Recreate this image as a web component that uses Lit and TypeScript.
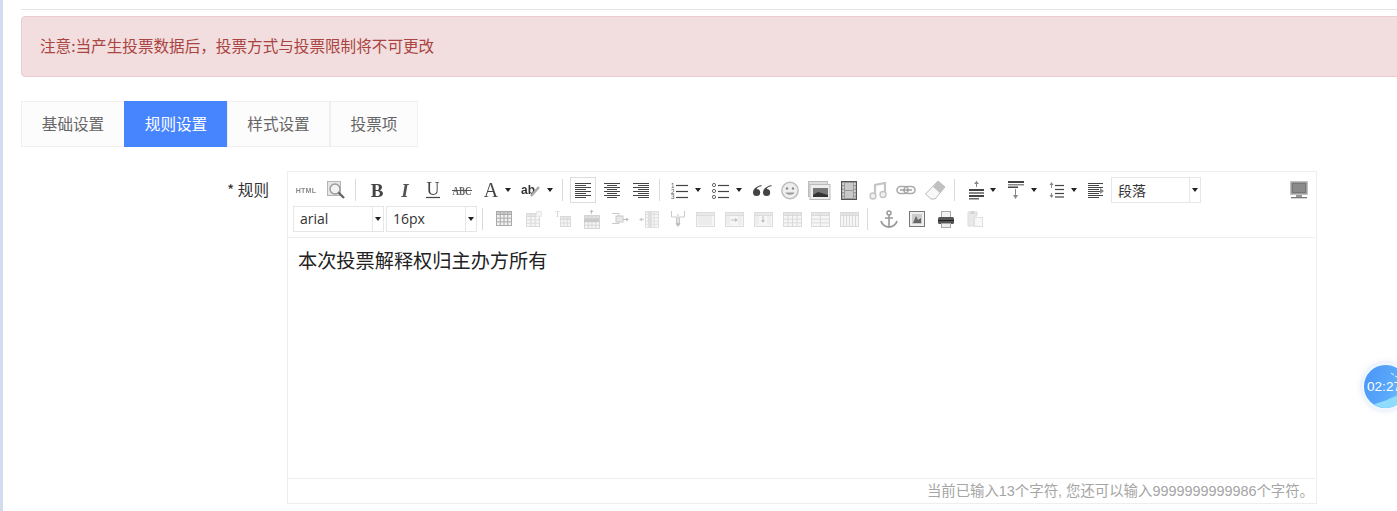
import { LitElement, html, css, svg } from "lit";
import { customElement } from "lit/decorators.js";

const D = "#555";
const line = (x1: number, y1: number, x2: number, y2: number, c = D, w = 1) =>
  svg`<line x1=${x1} y1=${y1} x2=${x2} y2=${y2} stroke=${c} stroke-width=${w}/>`;
const rect = (x: number, y: number, w: number, h: number, f = "none", s = "none") =>
  svg`<rect x=${x} y=${y} width=${w} height=${h} fill=${f} stroke=${s}/>`;
const grid = (x: number, y: number, w: number, h: number, cols: number, rows: number, c = "#c4c4c4", head = "#d8d8d8") => svg`
  ${rect(x + 0.5, y + 0.5, w, h, "#f2f2f2", c)}
  ${rect(x + 0.5, y + 0.5, w, 3, head, c)}
  ${Array.from({ length: cols - 1 }, (_, i) => line(x + 0.5 + ((i + 1) * w) / cols, y, x + 0.5 + ((i + 1) * w) / cols, y + h, c))}
  ${Array.from({ length: rows - 1 }, (_, i) => line(x, y + 3.5 + ((i + 1) * (h - 3)) / rows, x + w, y + 3.5 + ((i + 1) * (h - 3)) / rows, c))}`;
const txtLines = (ys: number[], xs: [number, number][], c = "#444") =>
  ys.map((y, i) => line(xs[i % xs.length][0], y + 0.5, xs[i % xs.length][1], y + 0.5, c, 1));

const icons: Record<string, unknown> = {
  html: svg`<text x="10" y="13" font-size="7" font-weight="700" text-anchor="middle" fill="#888" font-family="Liberation Sans" letter-spacing=".3">HTML</text>`,
  preview: svg`<rect x="1.5" y="1.5" width="13" height="14" fill="#e6e6e6" stroke="#b5b5b5"/><circle cx="9" cy="9" r="5" fill="#f2f2f2" stroke="#999" stroke-width="1.4"/><path d="M12.5 12.5 18 18" stroke="#666" stroke-width="2.4"/>`,
  bold: svg`<text x="10" y="16.5" font-size="19" font-weight="700" text-anchor="middle" fill="#444" font-family="Liberation Serif">B</text>`,
  italic: svg`<text x="10" y="16.5" font-size="19" font-weight="700" font-style="italic" text-anchor="middle" fill="#555" font-family="Liberation Serif">I</text>`,
  underline: svg`<text x="10" y="15" font-size="18" text-anchor="middle" fill="#444" font-family="Liberation Serif">U</text>${line(3, 17.5, 17, 17.5, "#444", 1.2)}`,
  strike: svg`<text x="10" y="14.5" font-size="12" font-weight="700" text-anchor="middle" fill="#666" font-family="Liberation Serif" textLength="19" lengthAdjust="spacingAndGlyphs">ABC</text>${line(0, 10.5, 20, 10.5, "#555")}`,
  color: svg`<text x="10" y="16.5" font-size="20" text-anchor="middle" fill="#444" font-family="Liberation Serif">A</text>`,
  back: svg`<text x="7" y="14" font-size="12" font-weight="700" text-anchor="middle" fill="#333" font-family="Liberation Sans">ab</text><path d="M10 16 18 7" stroke="#aaa" stroke-width="2.6"/>`,
  left: svg`<g>${txtLines([3, 5, 7, 9, 11, 13, 15, 17], [[2, 18], [2, 13], [2, 18], [2, 13]])}</g>`,
  center: svg`<g>${txtLines([3, 5, 7, 9, 11, 13, 15, 17], [[2, 18], [5, 15], [2, 18], [5, 15]])}</g>`,
  right: svg`<g>${txtLines([3, 5, 7, 9, 11, 13, 15, 17], [[2, 18], [7, 18], [2, 18], [7, 18]])}</g>`,
  ol: svg`<text x="1" y="7.5" font-size="6.5" fill="#555" font-family="Liberation Sans">1</text><text x="1" y="13.5" font-size="6.5" fill="#555" font-family="Liberation Sans">2</text><text x="1" y="19" font-size="6.5" fill="#555" font-family="Liberation Sans">3</text>${line(6, 5.5, 18, 5.5, "#444", 1.2)}${line(6, 11.5, 18, 11.5, "#444", 1.2)}${line(6, 17.5, 18, 17.5, "#444", 1.2)}`,
  ul: svg`<circle cx="3" cy="5" r="1.6" fill="none" stroke="#666"/><circle cx="3" cy="11" r="1.6" fill="none" stroke="#666"/><circle cx="3" cy="17" r="1.6" fill="none" stroke="#666"/>${line(7, 5.5, 18, 5.5, "#444", 1.2)}${line(7, 11.5, 18, 11.5, "#444", 1.2)}${line(7, 17.5, 18, 17.5, "#444", 1.2)}`,
  quote: svg`<path d="M9.5 5C5 6 1 9 1 12.5a3.6 3.6 0 1 0 3.6-3.6c.4-1.4 3-2.4 4.9-2.6ZM19.5 5c-4.5 1-8.5 4-8.5 7.5a3.6 3.6 0 1 0 3.6-3.6c.4-1.4 3-2.4 4.9-2.6Z" fill="#444"/>`,
  emoji: svg`<circle cx="10" cy="10.5" r="8.2" fill="#eee" stroke="#bbb" stroke-width="1.4"/><circle cx="7" cy="8.5" r="1.2" fill="#888"/><circle cx="13" cy="8.5" r="1.2" fill="#888"/><path d="M5.5 12.5h9c-1 3-8 3-9 0Z" fill="#999"/>`,
  image: svg`<rect x="-.5" y="1.5" width="19" height="15" fill="#ddd" stroke="#bbb"/><rect x="1" y="4.5" width="20" height="15" fill="#eee" stroke="#bbb"/><rect x="4" y="8" width="15" height="9" fill="#777"/><path d="M4 15l5-3 10 3v2H4Z" fill="#333"/>`,
  video: svg`<rect x="2.5" y="1.5" width="15" height="18" fill="#999" stroke="#555"/><rect x="6" y="3" width="8" height="7" fill="#c9c9c9"/><rect x="6" y="11" width="8" height="7" fill="#c9c9c9"/><path d="M4.2 3v15" stroke="#ddd" stroke-dasharray="2 1.5" stroke-width="1.6"/><path d="M15.8 3v15" stroke="#ddd" stroke-dasharray="2 1.5" stroke-width="1.6"/>`,
  music: svg`<path d="M7 15V5l10-2v11" fill="none" stroke="#c4c4c4" stroke-width="2.2"/><circle cx="5" cy="16" r="3" fill="#f0f0f0" stroke="#c4c4c4" stroke-width="1.4"/><circle cx="15" cy="14.5" r="3" fill="#f0f0f0" stroke="#c4c4c4" stroke-width="1.4"/>`,
  link: svg`<rect x="1" y="6.5" width="11" height="7" rx="3.5" fill="none" stroke="#aaa" stroke-width="1.6"/><rect x="8" y="6.5" width="11" height="7" rx="3.5" fill="none" stroke="#aaa" stroke-width="1.6"/>${line(4, 10, 16, 10, "#999", 1.4)}`,
  eraser: svg`<path d="M13 1 20 7 10 19H6L0.5 14Z" fill="#f8f8f8" stroke="#bbb"/><path d="M13 1 20 7 15 13 8 7Z" fill="#c0c0c0"/>`,
  rowbefore: svg`${line(10.5, 1, 10.5, 7, "#888")}<path d="M8 4l2.5-3L13 4Z" fill="#888"/>${rect(3, 9, 15, 2, "#444")}${rect(3, 12, 15, 2, "#888")}${rect(3, 15, 15, 2, "#444")}${rect(3, 18, 10, 1.5, "#666")}`,
  rowafter: svg`${rect(2, 1, 16, 2, "#444")}${rect(2, 4, 16, 1.5, "#888")}${rect(2, 6.5, 10, 1.5, "#444")}${line(9.5, 9, 9.5, 18, "#888")}<path d="M7 15l2.5 4 2.5-4Z" fill="#888"/>`,
  height: svg`<path d="M5.5 4V8M5.5 13v4" stroke="#888"/><path d="M3.5 5l2-3 2 3ZM3.5 15l2 3 2-3Z" fill="#888"/>${line(9, 5.5, 18, 5.5, "#444", 1.2)}${line(9, 9.5, 18, 9.5, "#444", 1.2)}${line(9, 13.5, 18, 13.5, "#444", 1.2)}${line(9, 17, 18, 17, "#444", 1.2)}`,
  indent: svg`${txtLines([3, 5, 7, 9, 11, 13, 15, 17], [[2, 17], [2, 13], [2, 17], [2, 13]])}<path d="M14 8l4 3-4 3Z" fill="#888"/>`,
  monitor: svg`<rect x="2" y="2" width="16" height="12" fill="#777" stroke="#aaa" stroke-width="1.5"/><rect x="4" y="4" width="12" height="8" fill="#8a8a8a"/><rect x="7" y="15" width="6" height="2" fill="#999"/><rect x="2" y="17" width="16" height="1.3" fill="#777"/>`,
  table: svg`${grid(2, 2, 15, 14, 4, 3, "#aaa", "#ccc")}`,
  deltable: svg`${grid(2, 4, 13, 13, 3, 3)}<path d="M12 2h6v6h-6Z" fill="#ddd"/><path d="M13 3l4 4M17 3l-4 4" stroke="#fff"/>`,
  caption: svg`<text x="3" y="8" font-size="8" fill="#aaa" font-family="Liberation Serif">T</text>${grid(8, 7, 10, 10, 3, 2)}`,
  insrow: svg`<path d="M10.5 1v4" stroke="#999"/><path d="M8.5 3l2-2.5 2 2.5Z" fill="#999"/>${grid(3, 6, 15, 13, 4, 3, "#bbb", "#ccc")}${rect(3, 10, 15, 3, "#aaa")}`,
  inscol: svg`<path d="M2 4.5h7v5h3m-3 0v5h-7" fill="none" stroke="#aaa"/>${rect(6, 7, 7, 6, "#ddd", "#aaa")}<path d="M13 10.5h4" stroke="#999"/><path d="M16 8.5l3 2-3 2Z" fill="#999"/>`,
  delcol: svg`<path d="M1 10.5h4" stroke="#aaa"/><path d="M3 8.5l-3 2 3 2Z" fill="#aaa"/>${grid(6, 2, 13, 16, 3, 4, "#ccc", "#e6e6e6")}${rect(9, 2.5, 4, 16, "#ccc")}`,
  split: svg`<path d="M3.5 2v6h5v8h3V8h5V2" fill="none" stroke="#aaa"/><path d="M10 5v11" stroke="#999"/><path d="M7.5 14l2.5 4 2.5-4Z" fill="#999"/>`,
  cell1: svg`${grid(1, 3, 18, 14, 1, 1, "#c8c8c8", "#ddd")}${rect(3, 7, 14, 9, "#e2e2e2")}`,
  cell2: svg`${grid(1, 3, 18, 14, 1, 1, "#c8c8c8", "#ddd")}${rect(2, 7, 4, 9, "#e4e4e4")}${rect(14, 7, 4, 9, "#e4e4e4")}<path d="M7 11h5" stroke="#999"/><path d="M11 9l3 2-3 2Z" fill="#999"/>`,
  cell3: svg`${grid(1, 3, 18, 14, 1, 1, "#c8c8c8", "#ddd")}${rect(2, 7, 4, 9, "#e4e4e4")}${rect(14, 7, 4, 9, "#e4e4e4")}<path d="M10 7v6" stroke="#999"/><path d="M8 11l2 3 2-3Z" fill="#999"/>`,
  cell4: svg`${grid(1, 3, 18, 14, 4, 3)}`,
  cell5: svg`${grid(1, 3, 18, 14, 2, 3)}`,
  cell6: svg`${grid(1, 3, 18, 14, 6, 1)}`,
  anchor: svg`<circle cx="10" cy="4" r="2" fill="none" stroke="#999" stroke-width="1.5"/><path d="M10 6v12M6 9h8" stroke="#999" stroke-width="1.6"/><path d="M2 12c1 4 5 6 8 6s7-2 8-6" fill="none" stroke="#999" stroke-width="1.8"/>`,
  pic: svg`<rect x="2.5" y="2.5" width="15" height="15" fill="#eee" stroke="#777"/><rect x="5" y="5" width="10" height="10" fill="#ccc"/><path d="M6 14l3-7 2 4 3-2v5Z" fill="#666"/>`,
  print: svg`<rect x="5.5" y="2.5" width="9" height="6" fill="#f2f2f2" stroke="#aaa"/><rect x="2" y="8" width="16" height="7" rx="1.5" fill="#555"/><rect x="2" y="11" width="16" height="1" fill="#222"/><rect x="5.5" y="14.5" width="9" height="4" fill="#eee" stroke="#aaa"/>`,
  paste: svg`<path d="M3 3h9v4H9v10H3Z" fill="#ddd" stroke="#c8c8c8"/><rect x="5.5" y="2" width="4" height="3" fill="#bbb"/><rect x="9.5" y="8.5" width="8" height="9" fill="#f4f4f4" stroke="#ccc"/>`,
};

type Item =
  | { t: "i"; n: string; x: number; cap?: number; on?: boolean; off?: boolean }
  | { t: "s"; x: number }
  | { t: "c"; x: number; w: number; label: string };

const row1: Item[] = [
  { t: "i", n: "html", x: 296 }, { t: "i", n: "preview", x: 326 }, { t: "s", x: 355 },
  { t: "i", n: "bold", x: 367 }, { t: "i", n: "italic", x: 395 }, { t: "i", n: "underline", x: 423 }, { t: "i", n: "strike", x: 452 },
  { t: "i", n: "color", x: 481, cap: 24 }, { t: "i", n: "back", x: 521, cap: 26 }, { t: "s", x: 562 },
  { t: "i", n: "left", x: 573, on: true }, { t: "i", n: "center", x: 602 }, { t: "i", n: "right", x: 631 }, { t: "s", x: 659 },
  { t: "i", n: "ol", x: 670, cap: 25 }, { t: "i", n: "ul", x: 711, cap: 25 }, { t: "i", n: "quote", x: 752 }, { t: "i", n: "emoji", x: 780 },
  { t: "i", n: "image", x: 809 }, { t: "i", n: "video", x: 839 }, { t: "i", n: "music", x: 868 }, { t: "i", n: "link", x: 896 }, { t: "i", n: "eraser", x: 925 }, { t: "s", x: 954 },
  { t: "i", n: "rowbefore", x: 966, cap: 24 }, { t: "i", n: "rowafter", x: 1006, cap: 25 }, { t: "i", n: "height", x: 1046, cap: 25 }, { t: "i", n: "indent", x: 1086 },
  { t: "c", x: 1111, w: 90, label: "段落" }, { t: "i", n: "monitor", x: 1289 },
];
const row2: Item[] = [
  { t: "c", x: 293, w: 91, label: "arial" }, { t: "c", x: 386, w: 91, label: "16px" }, { t: "s", x: 482 },
  { t: "i", n: "table", x: 494 }, { t: "i", n: "deltable", x: 524, off: true }, { t: "i", n: "caption", x: 552, off: true }, { t: "i", n: "insrow", x: 581, off: true },
  { t: "i", n: "inscol", x: 610, off: true }, { t: "i", n: "delcol", x: 639, off: true }, { t: "i", n: "split", x: 668, off: true }, { t: "i", n: "cell1", x: 695, off: true },
  { t: "i", n: "cell2", x: 724, off: true }, { t: "i", n: "cell3", x: 753, off: true }, { t: "i", n: "cell4", x: 782, off: true }, { t: "i", n: "cell5", x: 810, off: true }, { t: "i", n: "cell6", x: 839, off: true }, { t: "s", x: 867 },
  { t: "i", n: "anchor", x: 879 }, { t: "i", n: "pic", x: 907 }, { t: "i", n: "print", x: 936 }, { t: "i", n: "paste", x: 965, off: true },
];

@customElement("app-root")
export class AppRoot extends LitElement {
  static styles = css`
    :host { display: block; height: 511px; overflow: hidden; position: relative; background: #fff;
      font-family: "Noto Sans CJK SC", "Liberation Sans", sans-serif; color: #333; box-sizing: border-box;
      border-left: 3px solid #d2dcef; }
    .main { padding: 9px 0 0 18px; }
    .rule { height: 1px; background: #e5e5e5; margin-bottom: 6px; }
    .alert { height: 61px; box-sizing: border-box; margin-right: -30px; background: #f2dede; border: 1px solid #ebccd1;
      border-radius: 4px; color: #a94442; font-size: 15.6px; display: flex; align-items: center; padding: 0 18px 3px; margin-bottom: 24px; }
    .tabs { display: flex; height: 46px; margin-bottom: 24px; }
    .tab { width: 103px; box-sizing: border-box; display: flex; align-items: center; justify-content: center;
      background: #fcfcfc; border: 1px solid #f0f0f0; border-right: 0; font-size: 15.6px; color: #666; padding-bottom: 2px; }
    .tab:nth-child(3) { border-right: 1px solid #eee; }
    .tab:last-child { width: 88px; border-right: 1px solid #f0f0f0; }
    .tab.active { background: #4785ff; border-color: #4785ff; color: #fff; }
    .field { display: flex; }
    .label { width: 266px; box-sizing: border-box; text-align: right; padding-right: 18px; font-size: 15.6px; line-height: 20px; padding-top: 8px; color: #333; }
    .editor { width: 1030px; height: 333px; box-sizing: border-box; border: 1px solid #eee; display: flex; flex-direction: column; }
    .toolbar { height: 66px; flex: none; box-sizing: border-box; border-bottom: 1px solid #eee; margin-right: 1px; display: flex; flex-direction: column; }
    .trow { height: 29px; flex: none; position: relative; }
    .trow.top { margin-top: 3px; height: 29px; }
    .ic { position: absolute; top: 5px; width: 20px; height: 20px; filter: blur(.3px); }
    .ic svg { display: block; overflow: visible; }
    .ic.off { opacity: .62; }
    .onbox { position: absolute; top: 2px; width: 26px; height: 26px; box-sizing: border-box; border: 1px solid #ddd; background: #fff; }
    .caret { position: absolute; top: 13px; width: 0; height: 0; border: 3.5px solid transparent; border-top: 4px solid #222; border-bottom: 0; }
    .sep { position: absolute; top: 4px; width: 1px; height: 22px; background: #d9d9d9; }
    .combo { position: absolute; top: 2px; height: 26px; box-sizing: border-box; border: 1px solid #e6e6e6; background: #fff;
      display: flex; align-items: center; font-size: 14px; color: #333; padding-bottom: 0; }
    .combo span { flex: 1; padding-left: 6px; padding-bottom: 1px; font-family: "Open Sans", "Noto Sans CJK SC", sans-serif; }
    .combo i { width: 10px; height: 100%; border-left: 1px solid #e6e6e6; position: relative; flex: none; }
    .combo i::after { content: ""; position: absolute; left: 2px; top: 10px; border: 3.5px solid transparent; border-top: 4px solid #222; border-bottom: 0; }
    .body { flex: 1; padding: 9px 10px; font-size: 19.2px; line-height: 27px; color: #222; }
    .foot { height: 25px; flex: none; box-sizing: border-box; border-top: 1px solid #eee; margin-right: 1px; text-align: right; padding-right: 1px;
      font-size: 14.4px; line-height: 24px; color: #a5a5a5; font-family: "Liberation Sans", "Noto Sans CJK SC", sans-serif; }
    .bubble { position: absolute; left: 1359px; top: 363px; width: 47px; height: 47px; box-sizing: border-box; border-radius: 50%;
      border: 2px solid #eef6ff; box-shadow: 0 0 6px rgba(120,160,220,.35); overflow: hidden; color: #fff; font-size: 13.6px;
      background: linear-gradient(110deg, #4a94f7 0%, #5aaafa 60%, #86d0ff 100%);
      font-family: "Liberation Sans", sans-serif; display: flex; align-items: center; padding-left: 3px; }
    .bubble svg { position: absolute; inset: 0; }
    .bubble span { position: relative; white-space: nowrap; }
  `;

  private rowBase = 288;

  private renderItem(it: Item) {
    const at = (x: number) => `left:${x - this.rowBase}px`;
    if (it.t === "s") return html`<div class="sep" style=${at(it.x)}></div>`;
    if (it.t === "c")
      return html`<div class="combo" style="${at(it.x)};width:${it.w}px"><span>${it.label}</span><i></i></div>`;
    return html`
      ${it.on ? html`<div class="onbox" style=${at(it.x - 3)}></div>` : ""}
      <div class="ic ${it.off ? "off" : ""}" style=${at(it.x)}>
        <svg width="20" height="20" viewBox="0 0 20 20">${icons[it.n]}</svg>
      </div>
      ${it.cap ? html`<div class="caret" style=${at(it.x + it.cap)}></div>` : ""}`;
  }

  render() {
    const tabs = ["基础设置", "规则设置", "样式设置", "投票项"];
    return html`
      <div class="main">
        <div class="rule"></div>
        <div class="alert">注意:当产生投票数据后，投票方式与投票限制将不可更改</div>
        <div class="tabs">
          ${tabs.map((t, i) => html`<div class="tab ${i === 1 ? "active" : ""}">${t}</div>`)}
        </div>
        <div class="field">
          <div class="label">* 规则</div>
          <div class="editor">
            <div class="toolbar">
              <div class="trow top">${row1.map((i) => this.renderItem(i))}</div>
              <div class="trow">${row2.map((i) => this.renderItem(i))}</div>
            </div>
            <div class="body">本次投票解释权归主办方所有</div>
            <div class="foot">当前已输入13个字符, 您还可以输入9999999999986个字符。</div>
          </div>
        </div>
      </div>
      <div class="bubble">
        <svg viewBox="0 0 43 43"><path d="M0 41c8-1 14-3 20-5s10-5 23-9v16H0Z" fill="#8fdcff"/><path d="M27 8l3 2M31 11l2 1" stroke="#e6f5ff" stroke-width="1"/></svg>
        <span>02:27</span>
      </div>`;
  }
}
